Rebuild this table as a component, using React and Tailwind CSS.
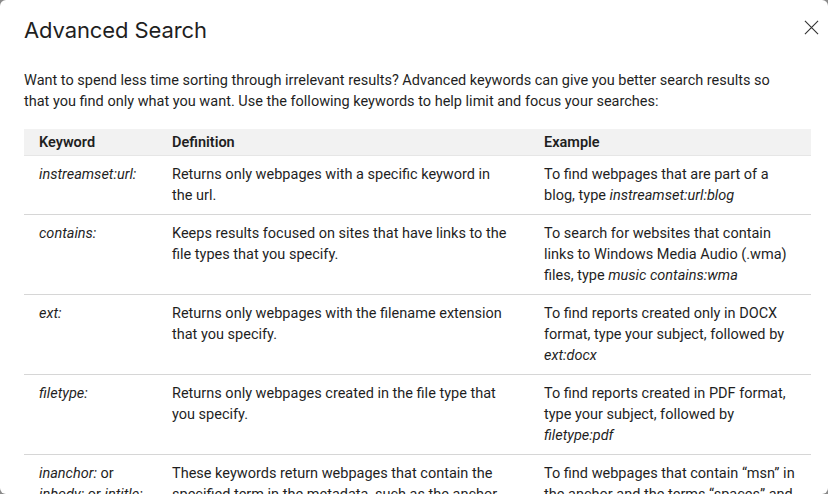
import React from "react";

const rows = [
  {
    k: <i>instreamset:url:</i>,
    d: "Returns only webpages with a specific keyword in the url.",
    e: (
      <>
        To find webpages that are part of a blog, type <i>instreamset:url:blog</i>
      </>
    ),
  },
  {
    k: <i>contains:</i>,
    d: "Keeps results focused on sites that have links to the file types that you specify.",
    e: (
      <>
        To search for websites that contain links to Windows Media Audio (.wma) files, type{" "}
        <i>music contains:wma</i>
      </>
    ),
  },
  {
    k: <i>ext:</i>,
    d: "Returns only webpages with the filename extension that you specify.",
    e: (
      <>
        To find reports created only in DOCX format, type your subject, followed by <i>ext:docx</i>
      </>
    ),
  },
  {
    k: <i>filetype:</i>,
    d: "Returns only webpages created in the file type that you specify.",
    e: (
      <>
        To find reports created in PDF format, type your subject, followed by <i>filetype:pdf</i>
      </>
    ),
  },
  {
    k: (
      <>
        <i>inanchor:</i> or <i>inbody:</i> or <i>intitle:</i>
      </>
    ),
    d: "These keywords return webpages that contain the specified term in the metadata, such as the anchor text, body, or title of the site, respectively.",
    e: (
      <>
        To find webpages that contain “msn” in the anchor and the terms “spaces” and “magog” in the body, type{" "}
        <i>inanchor:msn inbody:spaces inbody:magog</i>
      </>
    ),
  },
];

const App = () => {
  return (
    <div className="h-[494px] w-[828px] overflow-hidden bg-[#8a8a8a]">
      <div
        className="h-full w-full rounded-[6px] bg-white text-[#1f1f1f] relative"
        style={{ fontFamily: "Roboto, 'Noto Sans', sans-serif" }}
      >
        <div className="flex items-start justify-between pl-6 pr-[8px] pt-[14px]">
          <h1
            className="text-[22px] leading-[32px] font-normal tracking-[-0.1px]"
            style={{ fontFamily: "Inter, sans-serif" }}
          >
            Advanced Search
          </h1>
          <button className="mt-[5px] p-[1px] text-[#333]">
            <svg width="15" height="15" viewBox="0 0 16 16" fill="none" stroke="currentColor" strokeWidth="1.2">
              <path d="M1 1L15 15M15 1L1 15" />
            </svg>
          </button>
        </div>

        <p className="mt-[24px] ml-6 max-w-[770px] text-[14.5px] leading-[21px]">
          Want to spend less time sorting through irrelevant results? Advanced keywords can give you better search
          results so that you find only what you want. Use the following keywords to help limit and focus your
          searches:
        </p>

        <div className="mx-6 mt-[17px] w-[787px] text-[14.5px] leading-[21px]">
          <div className="flex bg-[#f2f2f2] border-b border-[#e6e6e6] font-semibold h-[27px] items-center">
            <div className="w-[133px] pl-[15px]">Keyword</div>
            <div className="w-[372px] pl-[15px]">Definition</div>
            <div className="flex-1 pl-[15px]">Example</div>
          </div>
          {rows.map((r, i) => (
            <div key={i} className="flex border-b border-[#d6d6d6] pt-[8px] pb-[8px]">
              <div className="w-[133px] pl-[15px] pr-2">{r.k}</div>
              <div className="w-[372px] pl-[15px] pr-4">{r.d}</div>
              <div className="flex-1 pl-[15px] pr-4">{r.e}</div>
            </div>
          ))}
        </div>
      </div>
    </div>
  );
};

export default App;
